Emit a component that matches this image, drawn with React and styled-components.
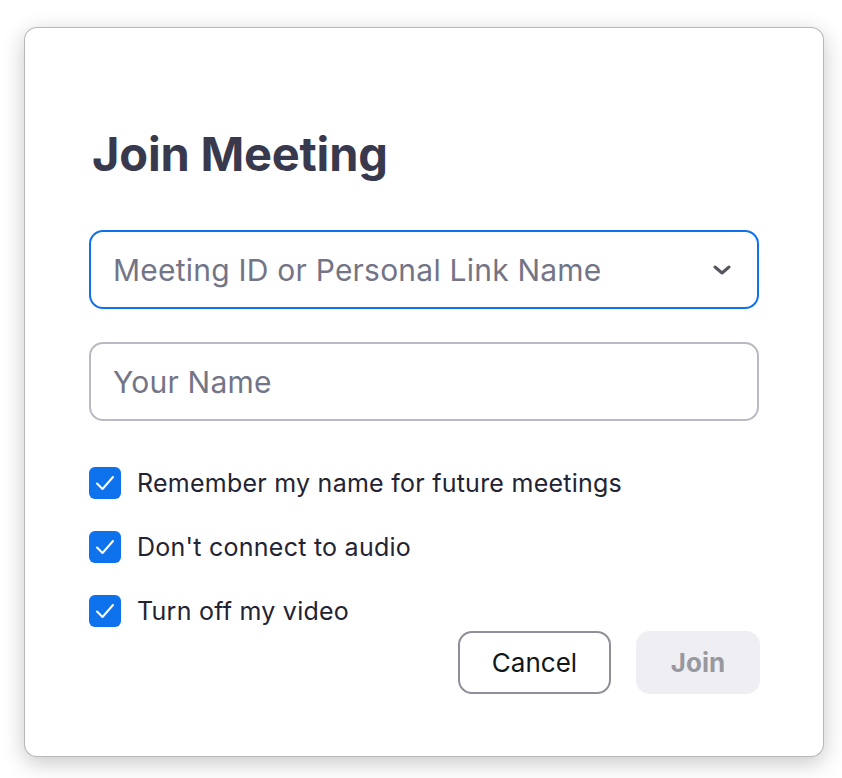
import React from 'react';
import styled, { createGlobalStyle } from 'styled-components';

const GlobalStyle = createGlobalStyle`
  body {
    margin: 0;
    background: #ffffff;
    font-family: Inter, "Noto Sans", sans-serif;
  }
`;

const Page = styled.div`
  width: 842px;
  height: 778px;
  padding: 27px 0 0 24px;
  box-sizing: border-box;
`;

const Window = styled.div`
  width: 800px;
  height: 730px;
  box-sizing: border-box;
  background: #ffffff;
  border: 1px solid rgba(0, 0, 0, 0.28);
  border-radius: 13px;
  box-shadow: 0 6px 22px rgba(0, 0, 0, 0.22);
  padding: 97px 64px 0 64px;
  display: flex;
  flex-direction: column;
`;

const Title = styled.h1`
  margin: 0 0 0 3px;
  font-size: 47px;
  line-height: 58px;
  font-weight: 700;
  color: #39394d;
  letter-spacing: -0.2px;
`;

const Field = styled.div`
  margin-top: ${(p) => p.$top}px;
  height: 79px;
  box-sizing: border-box;
  border: 2px solid ${(p) => (p.$focused ? '#0e72ed' : '#babac4')};
  border-radius: 14px;
  display: flex;
  align-items: center;
  padding: 0 26px 0 22px;
`;

const Placeholder = styled.span`
  flex: 1;
  font-size: 30px;
  letter-spacing: 0.22px;
  color: #747487;
`;

const Options = styled.div`
  margin-top: 46px;
  display: flex;
  flex-direction: column;
  gap: 32px;
`;

const Option = styled.label`
  display: flex;
  align-items: center;
  gap: 16px;
  font-size: 25px;
  letter-spacing: 0.25px;
  color: #232333;
`;

const Box = styled.span`
  width: 32px;
  height: 32px;
  border-radius: 6px;
  background: #0e72ed;
  display: flex;
  align-items: center;
  justify-content: center;
`;

const Actions = styled.div`
  margin-top: 4px;
  display: flex;
  justify-content: flex-end;
  gap: 25px;
`;

const Button = styled.button`
  height: 63px;
  box-sizing: border-box;
  border-radius: 14px;
  font-family: Inter, "Noto Sans", sans-serif;
  font-size: 26px;
  padding: 0;
  ${(p) =>
    p.$primary
      ? `
    width: 124px;
    margin-right: -1px;
    background: #efeff3;
    border: none;
    color: #98989e;
    font-weight: 700;
  `
      : `
    width: 153px;
    background: #ffffff;
    border: 2px solid #8f8f99;
    color: #131619;
    font-weight: 400;
  `}
`;

const Chevron = () => (
  <svg width="18" height="10" viewBox="0 0 18 10">
    <path d="M2 2 L9 8 L16 2" fill="none" stroke="#555560" strokeWidth="3" strokeLinecap="round" strokeLinejoin="round" />
  </svg>
);

const Check = () => (
  <svg width="22" height="18" viewBox="0 0 22 18">
    <path d="M3 9.5 L8.5 15 L19 3" fill="none" stroke="#ffffff" strokeWidth="2" strokeLinecap="round" strokeLinejoin="round" />
  </svg>
);

const options = [
  'Remember my name for future meetings',
  "Don't connect to audio",
  'Turn off my video',
];

const App = () => {
  return (
    <Page>
      <GlobalStyle />
      <Window>
        <Title>Join Meeting</Title>
        <Field $focused $top={47}>
          <Placeholder>Meeting ID or Personal Link Name</Placeholder>
          <Chevron />
        </Field>
        <Field $top={33}>
          <Placeholder>Your Name</Placeholder>
        </Field>
        <Options>
          {options.map((o) => (
            <Option key={o}>
              <Box>
                <Check />
              </Box>
              {o}
            </Option>
          ))}
        </Options>
        <Actions>
          <Button>Cancel</Button>
          <Button $primary>Join</Button>
        </Actions>
      </Window>
    </Page>
  );
};

export default App;
